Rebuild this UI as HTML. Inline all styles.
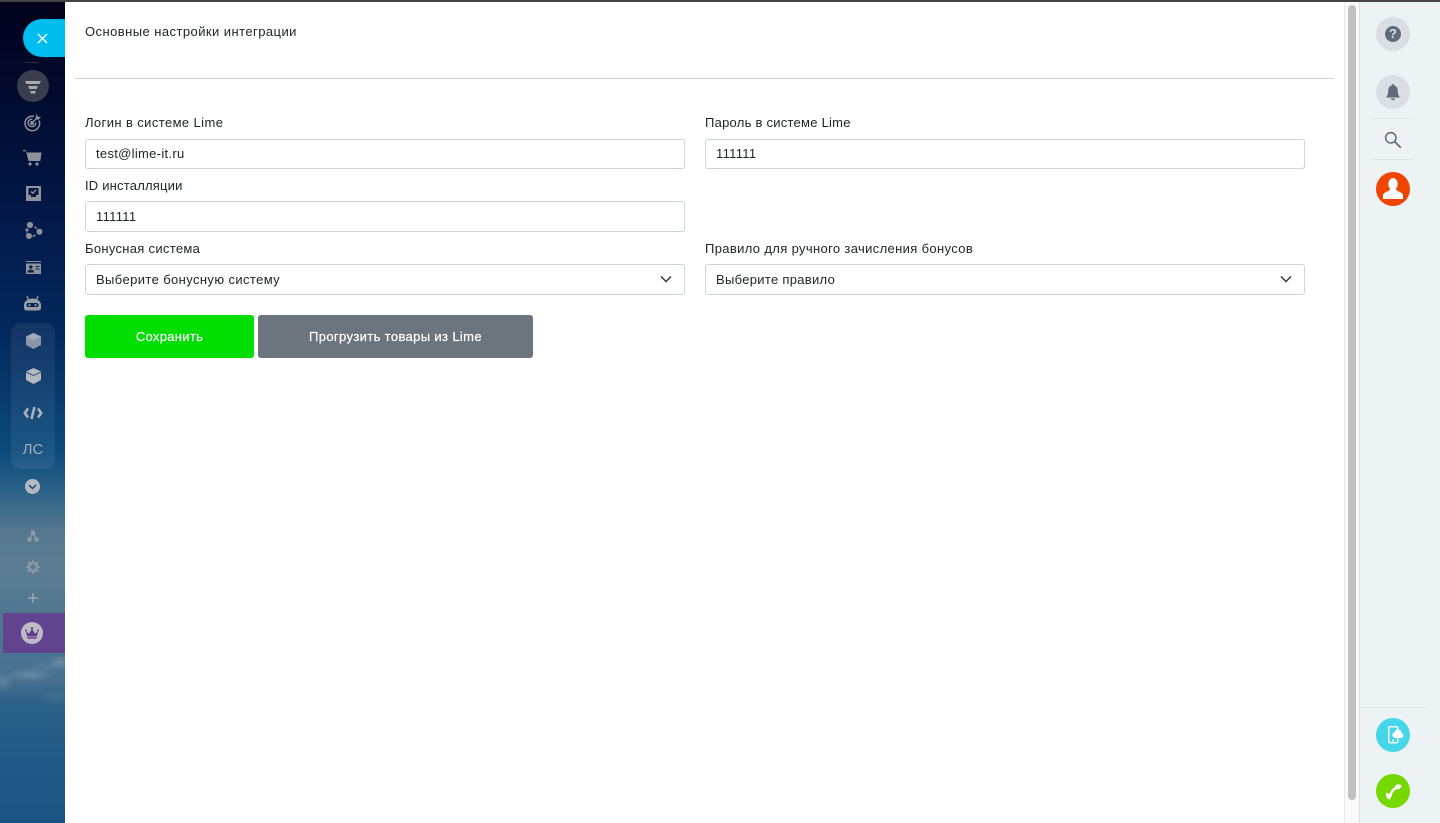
<!DOCTYPE html>
<html lang="ru"><head><meta charset="utf-8"><title>Настройки интеграции</title>
<style>
*{box-sizing:border-box}
html,body{margin:0;padding:0;width:1440px;height:823px;overflow:hidden;background:#fff;font-family:"Liberation Sans","DejaVu Sans",sans-serif;color:#212529}
.a{position:absolute}
.t{position:absolute;font-size:13px;line-height:16px;white-space:nowrap;color:#212529;letter-spacing:.38px}
.f{position:absolute;width:600px;background:#fff;border:1px solid #ced4da;border-radius:3px;font-size:13px;color:#212529;padding-left:10px;letter-spacing:.3px;white-space:nowrap}
.b{position:absolute;top:315px;height:43px;border-radius:3px;color:#fff;font-size:13px;line-height:43px;text-align:center;letter-spacing:.3px;-webkit-text-stroke:.2px #fff}
svg{position:absolute;display:block}
</style></head><body>
<div class="a" style="left:0;top:0;width:65px;height:823px;background:
radial-gradient(ellipse 12px 7px at 60px 662px,rgba(150,172,190,.45),transparent),
radial-gradient(ellipse 24px 7px at 30px 675px,rgba(150,172,190,.45),transparent),
radial-gradient(ellipse 12px 10px at 3px 682px,rgba(140,165,185,.35),transparent),
radial-gradient(ellipse 22px 6px at 48px 667px,rgba(130,155,178,.25),transparent),
radial-gradient(ellipse 18px 8px at 56px 698px,rgba(120,150,175,.18),transparent),
linear-gradient(180deg,#01021a 0,#010a2e 90px,#03194a 220px,#032a5e 340px,#0b4a7c 450px,#2a6288 490px,#55788f 530px,#5b7c92 570px,#4f7590 620px,#4a7493 655px,#467090 680px,#2a6088 705px,#215a88 760px,#1b5384 823px)"></div>
<div class="a" style="left:3px;top:613px;width:62px;height:40px;background:#62438f"></div>
<div class="a" style="left:0;top:0;width:1440px;height:2px;background:#444"></div>
<div class="a" style="left:23px;top:19px;width:42px;height:38px;background:#00bdf0;border-radius:19px 0 0 19px"></div>
<svg style="left:36px;top:32px" width="13" height="13" viewBox="0 0 13 13"><path d="M2 2l9 9M11 2l-9 9" stroke="#fff" stroke-width="1.4"/></svg>
<div class="a" style="left:25px;top:62px;width:14px;height:1px;background:#2a2f45"></div>
<div class="a" style="left:17px;top:70px;width:32px;height:32px;border-radius:50%;background:#3a3d4e"></div>
<svg style="left:24px;top:80px" width="18" height="14" viewBox="0 0 18 14"><path d="M1 1h16l-1.500 3h-13zM4 6h10l-1.500 3h-7zM6 11h6l-1 2.500H7z" fill="#a9abb3"/></svg>
<svg style="left:23px;top:113px" width="20" height="20" viewBox="0 0 20 20" fill="none" stroke="#8f929b" stroke-width="1.500"><path d="M16 7.500a7.300 7.300 0 1 1-5-4.200"/><path d="M12.700 9.500a3.800 3.800 0 1 1-3.300-3.400"/><circle cx="9" cy="10" r="1.200" fill="#8f929b"/><path d="M9.500 9.500l5-5" /><path d="M13.500 0.500l1 3 3.500.500-3 3-2.500-2z" fill="#8f929b" stroke="none"/></svg>
<svg style="left:23px;top:150px" width="19" height="16" viewBox="0 0 19 16"><path d="M0 0h2.500L4 2.500h14.500L17.300 11H5.500L3 1.300H0z" fill="#8f929b"/><circle cx="7" cy="14" r="1.600" fill="#8f929b"/><circle cx="14" cy="14" r="1.600" fill="#8f929b"/></svg>
<svg style="left:26px;top:186px" width="15" height="15" viewBox="0 0 15 15"><path d="M0 0h15v15H0z" fill="#8f929b"/><path d="M2.500 2h10v7h-2.500v2H5V9H2.500z" fill="#061a44"/><path d="M5 5.500l1.800 1.800L10 3.800" stroke="#8f929b" stroke-width="1.300" fill="none"/></svg>
<svg style="left:24px;top:220px" width="20" height="22" viewBox="0 0 20 22" fill="#8f929b"><circle cx="6" cy="5" r="3.100"/><circle cx="15.500" cy="11.700" r="3"/><circle cx="3" cy="10" r="1.600"/><circle cx="5" cy="16" r="3"/><path d="M10.500 6.500l2.500 2.300M11.500 15l-3 1.500M2.800 12.500v1" stroke="#8f929b" stroke-width="1.300" fill="none"/></svg>
<svg style="left:26px;top:261px" width="15" height="14" viewBox="0 0 15 14"><path d="M0 0h15v1H0z" fill="#8f929b"/><path d="M0 2.500h15V13H0z" fill="#8f929b"/><circle cx="4.800" cy="6" r="1.700" fill="#03204f"/><path d="M2 11c0-2.500 5.500-2.500 5.500 0zM9.500 5.500h4M9.500 8h4" fill="#03204f" stroke="#03204f"/></svg>
<svg style="left:24px;top:296px" width="17" height="15" viewBox="0 0 17 15" fill="#9a9da6"><path d="M0 9a8.500 6.500 0 0 1 17 0v3a2.500 2.500 0 0 1-2.500 2.500h-12A2.500 2.500 0 0 1 0 12z"/><path d="M3 0l1.500 4M14 0l-1.500 4" stroke="#9a9da6" stroke-width="1.300"/><rect x="2.500" y="7" width="12" height="4" rx="2" fill="#03245a"/><circle cx="5.500" cy="9" r="1.100" fill="#9a9da6"/><circle cx="11.500" cy="9" r="1.100" fill="#9a9da6"/></svg>
<div class="a" style="left:11px;top:323px;width:44px;height:146px;border-radius:10px;background:rgba(255,255,255,.065)"></div>
<svg style="left:26px;top:333px" width="15" height="16" viewBox="0 0 15 16"><path d="M7.500 0L15 3.500v8.500L7.500 16 0 12V3.500z" fill="#8d96a8"/><path d="M7.500 0L15 3.500 7.500 7 0 3.500z" fill="#a4abba"/></svg>
<svg style="left:26px;top:368px" width="15" height="16" viewBox="0 0 15 16"><path d="M7.500 0L15 3.500v8.500L7.500 16 0 12V3.500z" fill="#b3b7c0"/><path d="M0 4l7.500 3.500L15 4" stroke="#1e4370" fill="none" stroke-width=".8"/></svg>
<svg style="left:23px;top:406px" width="20" height="14" viewBox="0 0 20 14" fill="none" stroke="#aab1bd" stroke-width="2.600"><path d="M5 2.500L1.800 7 5 11.500M15 2.500L18.200 7 15 11.500M11.500 1L8.500 13"/></svg>
<div class="a" style="left:11px;top:441px;width:44px;text-align:center;font-size:15px;line-height:17px;color:#a3aebd">ЛС</div>
<div class="a" style="left:25px;top:479px;width:15px;height:15px;border-radius:50%;background:#b4b9bf"></div>
<svg style="left:28px;top:484px" width="9" height="6" viewBox="0 0 9 6"><path d="M1 1l3.500 3.500L8 1" stroke="#124b78" stroke-width="1.500" fill="none"/></svg>
<svg style="left:27px;top:530px" width="12" height="12" viewBox="0 0 12 12" fill="#8d9aa6"><circle cx="6" cy="2.800" r="2.400"/><circle cx="2.500" cy="9.500" r="2.300"/><circle cx="9.500" cy="9.500" r="2.300"/><path d="M6 3L2.500 9.500M6 3l3.500 6.500" stroke="#8d9aa6" stroke-width="1.500"/></svg>
<svg style="left:26px;top:560px" width="14" height="14" viewBox="0 0 14 14"><circle cx="7" cy="7" r="4" fill="none" stroke="#8b9aa6" stroke-width="2.600"/><path d="M7 0v14M0 7h14M2 2l10 10M12 2L2 12" stroke="#8b9aa6" stroke-width="1.700" stroke-dasharray="2.300 9.500 2.300"/></svg>
<svg style="left:28px;top:593px" width="10" height="10" viewBox="0 0 10 10"><path d="M5 0v10M0 5h10" stroke="#93a2ad" stroke-width="1.600"/></svg>
<div class="a" style="left:21px;top:622px;width:22px;height:22px;border-radius:50%;background:#bdbbc3"></div>
<svg style="left:25px;top:627px" width="14" height="12" viewBox="0 0 14 12" fill="#5d3f8c"><path d="M2 9.500L1 4.500l3 2L7 2l3 4.500 3-2-1 5z"/><circle cx="7" cy="1.500" r="1.200"/><circle cx="1" cy="3.500" r="1"/><circle cx="13" cy="3.500" r="1"/><path d="M2.500 10.300h9v1.400h-9z"/></svg>

<div class="t" style="left:85px;top:24px;letter-spacing:.44px">Основные настройки интеграции</div>
<div class="a" style="left:75px;top:78px;width:1259px;height:1px;background:#ced4da"></div>

<div class="t" style="left:85px;top:115px;letter-spacing:.4px">Логин в системе Lime</div>
<div class="t" style="left:705px;top:115px;letter-spacing:.25px">Пароль в системе Lime</div>
<div class="f" style="left:85px;top:139px;height:30px;line-height:28px;padding-left:10px">test@lime-it.ru</div>
<div class="f" style="left:705px;top:139px;height:30px;line-height:28px">111111</div>
<div class="t" style="left:85px;top:178px;letter-spacing:.2px">ID инсталляции</div>
<div class="f" style="left:85px;top:201px;height:31px;line-height:29px">111111</div>
<div class="t" style="left:85px;top:241px;letter-spacing:.3px">Бонусная система</div>
<div class="t" style="left:705px;top:241px;letter-spacing:.35px">Правило для ручного зачисления бонусов</div>
<div class="f" style="left:85px;top:264px;height:31px;line-height:29px;letter-spacing:.39px">Выберите бонусную систему</div>
<div class="f" style="left:705px;top:264px;height:31px;line-height:29px">Выберите правило</div>
<svg style="left:660px;top:275px" width="12" height="9" viewBox="0 0 12 9"><path d="M1 1.500l5 5 5-5" stroke="#343a40" stroke-width="1.500" fill="none"/></svg>
<svg style="left:1280px;top:275px" width="12" height="9" viewBox="0 0 12 9"><path d="M1 1.500l5 5 5-5" stroke="#343a40" stroke-width="1.500" fill="none"/></svg>
<div class="b" style="left:85px;width:169px;background:#00dd00">Сохранить</div>
<div class="b" style="left:258px;width:275px;background:#6c757d;letter-spacing:.36px">Прогрузить товары из Lime</div>

<div class="a" style="left:1344px;top:2px;width:15px;height:821px;background:#fafafa;border-left:1px solid #e8e8e8"></div>
<div class="a" style="left:1348px;top:5px;width:8px;height:795px;border-radius:4px;background:#c1c1c1"></div>
<div class="a" style="left:1359px;top:2px;width:81px;height:821px;background:#edf2f5;border-left:1px solid #d9e0e5"></div>

<div class="a" style="left:1376px;top:17px;width:34px;height:34px;border-radius:50%;background:#d9dee2"></div>
<div class="a" style="left:1385px;top:26px;width:16px;height:16px;border-radius:50%;background:#5f6b7c;color:#d9dee2;font-size:13px;font-weight:bold;line-height:16px;text-align:center">?</div>
<div class="a" style="left:1376px;top:75px;width:34px;height:34px;border-radius:50%;background:#d9dee2"></div>
<svg style="left:1386px;top:84px" width="14" height="17" viewBox="0 0 14 17" fill="#5f6b7c"><path d="M7 0a1.300 1.300 0 0 1 1.300 1.500C11 2.300 11.800 4.500 11.800 7c0 3 .7 4.500 2.200 6.500H0c1.500-2 2.200-3.500 2.200-6.500 0-2.500.8-4.700 3.500-5.500A1.300 1.300 0 0 1 7 0z"/><path d="M4.800 14.500h4.400A2.300 2.300 0 0 1 4.800 14.500z"/></svg>
<div class="a" style="left:1371px;top:118px;width:43px;height:1px;background:#dfe4e8"></div>
<svg style="left:1384px;top:131px" width="18" height="18" viewBox="0 0 18 18" fill="none" stroke="#5f6b7c"><circle cx="6.800" cy="6.800" r="5.200" stroke-width="1.500"/><path d="M10.800 10.800l6 6" stroke-width="1.800"/></svg>
<div class="a" style="left:1371px;top:159px;width:43px;height:1px;background:#dfe4e8"></div>
<div class="a" style="left:1376px;top:172px;width:34px;height:34px;border-radius:50%;background:#f04400"></div>
<svg style="left:1383px;top:178px" width="20" height="21" viewBox="0 0 20 21" fill="#fff"><ellipse cx="10" cy="6" rx="4.700" ry="6"/><path d="M7 11c0 2.500-7 2.800-7 6.500V21h20v-3.500c0-3.700-7-4-7-6.500z"/></svg>

<div class="a" style="left:1360px;top:707px;width:65px;height:1px;background:#dfe4e8"></div>
<div class="a" style="left:1376px;top:718px;width:34px;height:34px;border-radius:50%;background:#45d6ea"></div>
<svg style="left:1387px;top:725px" width="17" height="19" viewBox="0 0 17 19"><rect x="1.700" y="1.700" width="9" height="16" rx="1.300" fill="none" stroke="#fff" stroke-width="1.400"/><circle cx="6.200" cy="15.500" r="1" fill="#fff"/><circle cx="8" cy="10" r="2.700" fill="#fff"/><circle cx="11" cy="8" r="3.600" fill="#fff"/><circle cx="14" cy="10.500" r="2.500" fill="#fff"/><path d="M8 10.500h6V13H8z" fill="#fff"/></svg>
<div class="a" style="left:1376px;top:774px;width:34px;height:34px;border-radius:50%;background:#75d900"></div>
<svg style="left:1385px;top:783px" width="17" height="17" viewBox="0 0 17 17"><path d="M15.500 3.800C10 4 6 8 5 14" stroke="#fff" stroke-width="2.600" fill="none"/><path d="M9.500 3c2.300-2 6-2.300 7.500.3l-3.500 3.200zM1.500 9.500l5.300 3-2 4C2 16.500 0 12.500 1.500 9.500z" fill="#fff"/></svg>
</body></html>
